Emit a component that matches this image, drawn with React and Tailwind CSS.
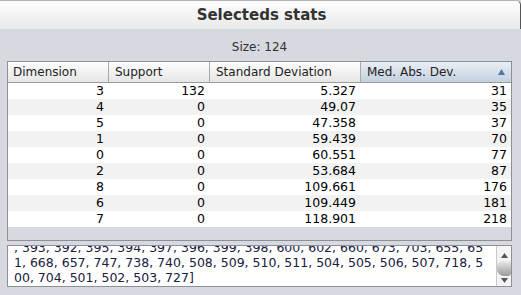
import React from 'react';

const rows = [
  { dim: 3, sup: 132, sd: '5.327', mad: 31 },
  { dim: 4, sup: 0, sd: '49.07', mad: 35 },
  { dim: 5, sup: 0, sd: '47.358', mad: 37 },
  { dim: 1, sup: 0, sd: '59.439', mad: 70 },
  { dim: 0, sup: 0, sd: '60.551', mad: 77 },
  { dim: 2, sup: 0, sd: '53.684', mad: 87 },
  { dim: 8, sup: 0, sd: '109.661', mad: 176 },
  { dim: 6, sup: 0, sd: '109.449', mad: 181 },
  { dim: 7, sup: 0, sd: '118.901', mad: 218 },
];

const lines = [
  ', 393, 392, 395, 394, 397, 396, 399, 398, 600, 602, 660, 673, 703, 655, 65',
  '1, 668, 657, 747, 738, 740, 508, 509, 510, 511, 504, 505, 506, 507, 718, 5',
  '00, 704, 501, 502, 503, 727]',
];

const font = { fontFamily: '"DejaVu Sans", Verdana, sans-serif' };

const App = () => {
  return (
    <div className="w-[521px] h-[295px] overflow-hidden flex flex-col bg-[#d6d9df] text-[12px]" style={font}>
      {/* title bar */}
      <div className="h-[29px] shrink-0 flex items-center justify-center bg-gradient-to-b from-[#fdfdfd] to-[#e9e9e9] border-t border-r border-t-[#b4b4b4] border-r-[#555] rounded-tr-[5px]">
        <span className="text-[15px] font-bold text-[#333] pl-[3px]">Selecteds stats</span>
      </div>

      <div className="flex-1 flex flex-col pl-[7px] pr-[9px] pt-[11px]">
        <div className="h-[15px] leading-[15px] text-center text-[#333]">Size: 124</div>

        {/* table */}
        <div className="mt-[6px] h-[180px] border border-[#8d9096] flex flex-col bg-[#d6d9df]">
          <div className="h-[21px] flex border-b border-[#9a9a9a] text-[#222]">
            <div className="w-[101px] pl-[5px] flex items-center border-r border-[#a9a9a9] bg-gradient-to-b from-[#fdfdfd] to-[#e6e6e6]">Dimension</div>
            <div className="w-[101px] pl-[6px] flex items-center border-r border-[#a9a9a9] bg-gradient-to-b from-[#fdfdfd] to-[#e6e6e6]">Support</div>
            <div className="w-[151px] pl-[6px] flex items-center border-r border-[#a9a9a9] bg-gradient-to-b from-[#fdfdfd] to-[#e6e6e6]">Standard Deviation</div>
            <div className="flex-1 pl-[6px] pr-[6px] flex items-center justify-between bg-gradient-to-b from-[#e9eef4] to-[#c3d1df]">
              <span>Med. Abs. Dev.</span>
              <svg width="7" height="6" viewBox="0 0 7 6"><path d="M3.5 0 L7 6 L0 6 Z" fill="#4f79a6" /></svg>
            </div>
          </div>
          {rows.map((r, i) => (
            <div key={i} className={`h-[16px] leading-[16px] flex text-[12.5px] text-black ${i % 2 ? 'bg-[#f2f2f2]' : 'bg-white'}`}>
              <div className="w-[101px] text-right pr-[5px]">{r.dim}</div>
              <div className="w-[101px] text-right pr-[5px]">{r.sup}</div>
              <div className="w-[151px] text-right pr-[5px]">{r.sd}</div>
              <div className="flex-1 text-right pr-[4px]">{r.mad}</div>
            </div>
          ))}
        </div>

        {/* text area */}
        <div className="mt-[4px] h-[42px] border border-[#8d9096] bg-white flex">
          <div className="flex-1 overflow-hidden pl-[6px] text-[12.5px] text-[#1a2040] leading-[15px]">
            <div className="-mt-[6px]">
              {lines.map((l, i) => (
                <div key={i} className="whitespace-pre">{l}</div>
              ))}
            </div>
          </div>
          <div className="w-[15px] flex flex-col items-center border-l border-[#c8c8c8] bg-[#f4f4f4]">
            <div className="h-[12px] flex items-end justify-center">
              <svg width="7" height="5" viewBox="0 0 7 5"><path d="M3.5 0 L7 5 L0 5 Z" fill="#555" /></svg>
            </div>
            <div className="mt-[2px] h-[16px] w-[14px] rounded-l-[7px] rounded-r-[3px] bg-gradient-to-b from-[#f0f0f0] via-[#c4c4c4] to-[#9a9a9a]" />
            <div className="mt-[2px] flex justify-center">
              <svg width="7" height="5" viewBox="0 0 7 5"><path d="M0 0 L7 0 L3.5 5 Z" fill="#555" /></svg>
            </div>
          </div>
        </div>
      </div>
    </div>
  );
};

export default App;
